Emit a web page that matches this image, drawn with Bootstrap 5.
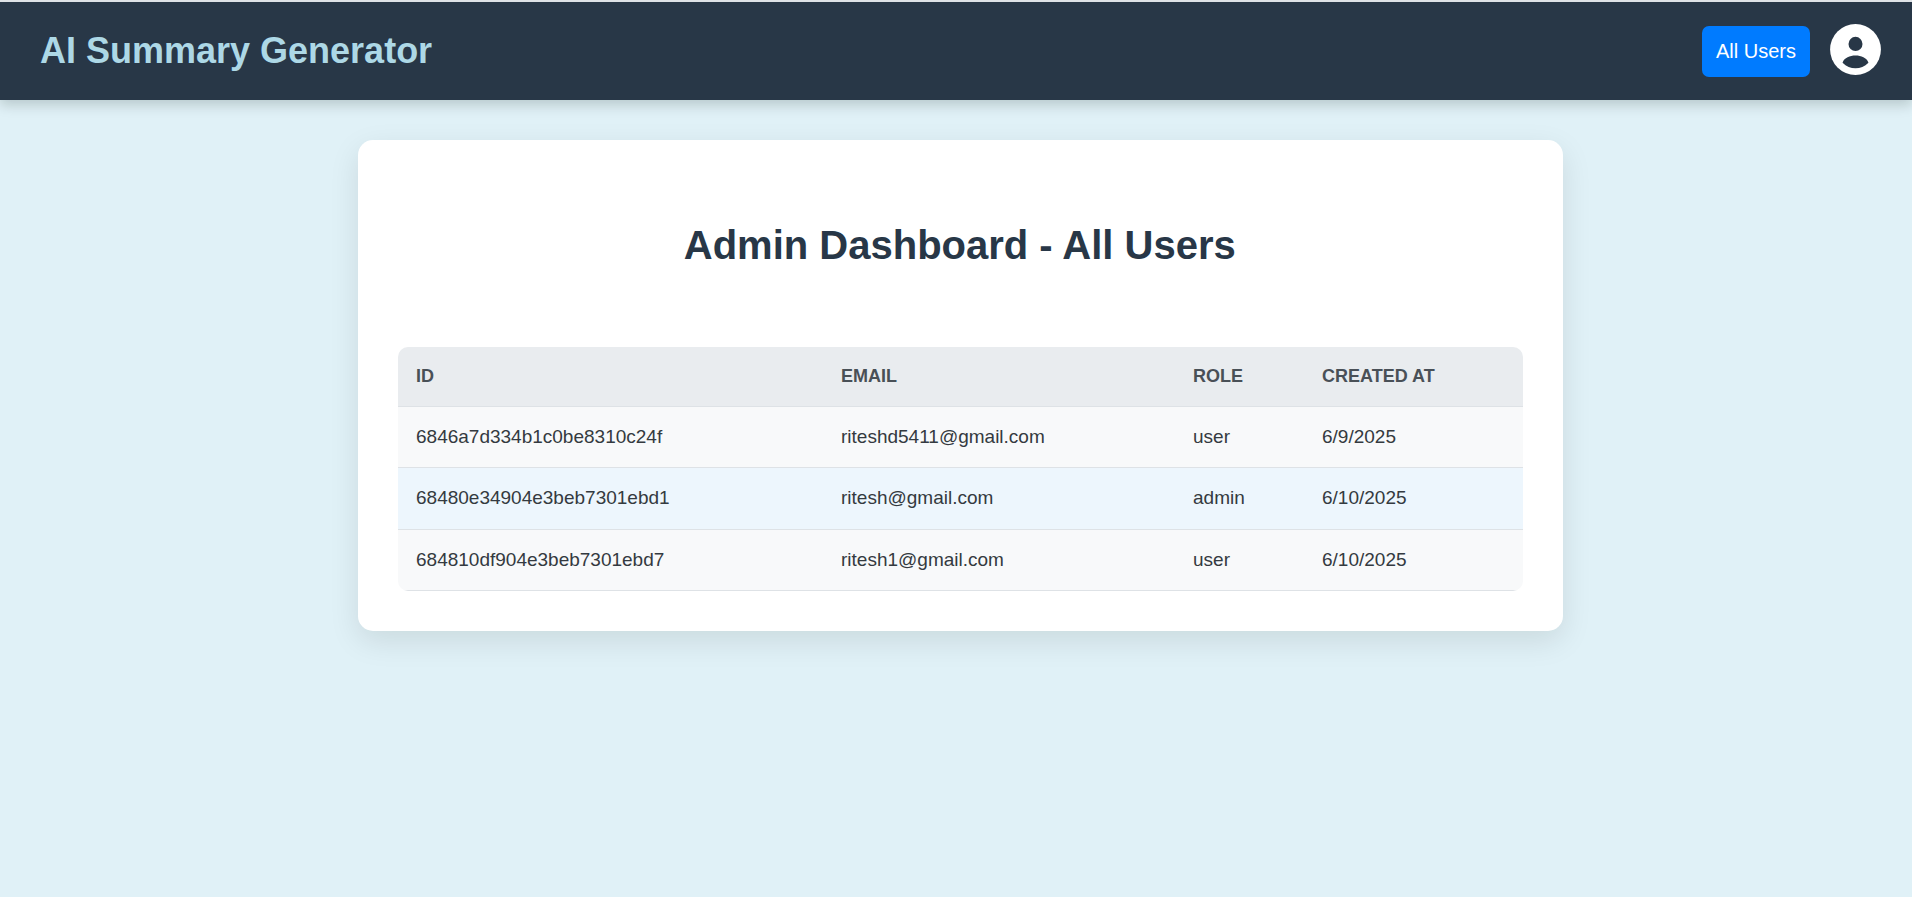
<!DOCTYPE html>
<html lang="en">
<head>
<meta charset="utf-8">
<meta name="viewport" content="width=device-width, initial-scale=1">
<title>AI Summary Generator</title>
<link rel="stylesheet" href="https://cdn.jsdelivr.net/npm/bootstrap@5.3.0/dist/css/bootstrap.min.css">
<style>
body{background:#e0f1f7;font-family:"Liberation Sans",Arial,sans-serif;color:#343a40;border-top:2px solid #dee2e6;min-height:100vh}
.topbar{background:#283747;height:98px;padding:0 26.5px 0 40px;box-shadow:0 5px 12px rgba(0,20,10,.18)}
.topbar .navbar-brand{color:#add8e6;font-size:36px;font-weight:700;line-height:1.2}
.btn-users{background:#007bff;color:#fff;font-size:20px;line-height:1.15;width:108px;height:51px;padding:0;border:0;border-radius:7px}
.account{margin:0 0 4px 14.5px}
.panel{width:1205px;margin:40px 0 0 358px;padding:79px 40px 40px;border:0;border-radius:15px;box-shadow:0 10px 30px rgba(0,20,10,.1)}
.panel h1{font-size:40px;font-weight:700;color:#283747;line-height:52px;margin:0 1.5px 76px 0}
.users{border-radius:10px;overflow:hidden}
.users .table{table-layout:fixed;font-size:19px;--bs-table-color:#343a40}
.users th,.users td{padding:0 18px;border-bottom:1px solid #dee2e6;height:61px;line-height:28px;background:#f8f9fa;color:#343a40;vertical-align:middle}
.users th{background:#e9ecef;color:#495057;font-size:18px;height:59px;padding-bottom:1px}
.users .picked td{background:#edf6fd;height:62px;padding-bottom:1px}
</style>
</head>
<body>
<nav class="navbar topbar">
  <a class="navbar-brand m-0 p-0">AI Summary Generator</a>
  <div class="d-flex align-items-center">
    <button class="btn btn-users">All Users</button>
    <svg class="account" width="61" height="61" viewBox="0 0 24 24" fill="none" role="img" aria-label="Account">
      <circle cx="12" cy="12" r="10" fill="#fff"/>
      <ellipse cx="12" cy="9.8" rx="2.75" ry="2.8" fill="#283747"/>
      <path fill="#283747" d="M6.9 17.2C7.7 15.2 9.7 14.4 12 14.4s4.3.8 5.1 2.8C15.6 18.7 13.9 19.4 12 19.4s-3.6-.7-5.1-2.2z"/>
    </svg>
  </div>
</nav>
<main class="card panel">
  <h1 class="text-center">Admin Dashboard - All Users</h1>
  <div class="users">
    <table class="table mb-0">
      <colgroup><col style="width:425px"><col style="width:352px"><col style="width:129px"><col></colgroup>
      <thead><tr><th>ID</th><th>EMAIL</th><th>ROLE</th><th>CREATED AT</th></tr></thead>
      <tbody>
        <tr><td>6846a7d334b1c0be8310c24f</td><td>riteshd5411@gmail.com</td><td>user</td><td>6/9/2025</td></tr>
        <tr class="picked"><td>68480e34904e3beb7301ebd1</td><td>ritesh@gmail.com</td><td>admin</td><td>6/10/2025</td></tr>
        <tr><td>684810df904e3beb7301ebd7</td><td>ritesh1@gmail.com</td><td>user</td><td>6/10/2025</td></tr>
      </tbody>
    </table>
  </div>
</main>
<script src="https://cdn.jsdelivr.net/npm/bootstrap@5.3.0/dist/js/bootstrap.bundle.min.js"></script>
</body>
</html>
